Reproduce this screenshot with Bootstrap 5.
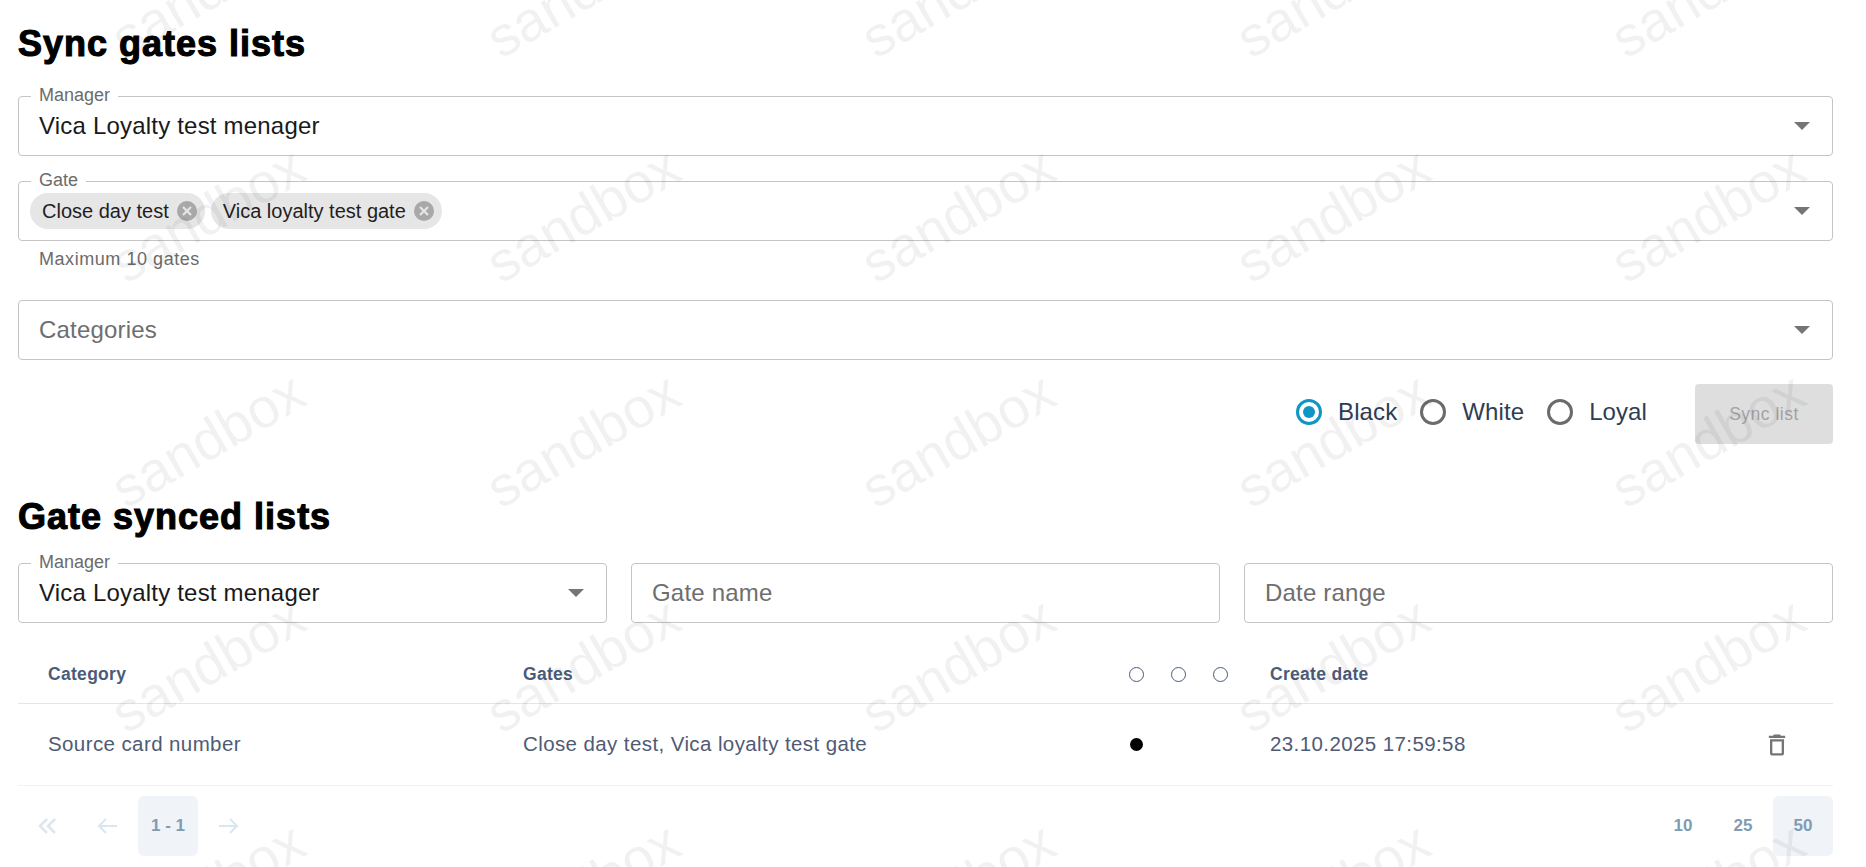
<!DOCTYPE html>
<html lang="en">
<head>
<meta charset="utf-8">
<title>Sync gates lists</title>
<link href="https://cdn.jsdelivr.net/npm/bootstrap@5.3.0/dist/css/bootstrap.min.css" rel="stylesheet">
<style>
html,body{height:867px;overflow:hidden;}
body{background:#fff;font-family:"Liberation Sans",Arial,sans-serif;color:#000;position:relative;}
.page-wrap{padding:0 33px 0 18px;}
.sec-title{font-size:36px;font-weight:700;line-height:37px;margin:0;color:#000;letter-spacing:1px;-webkit-text-stroke:1.1px #000;}
.title-a{padding-top:25px;margin-bottom:34px;}
.title-b{margin-top:54px;margin-bottom:28px;}
.fld{position:relative;border:1px solid #c4c4c4;border-radius:4px;height:60px;display:flex;align-items:center;padding:0 20px;font-size:24px;letter-spacing:.2px;color:#6e6e6e;background:transparent;}
.fld-eq{flex:1 1 0;}
.mt-gate{margin-top:25px;}
.mt-cat{margin-top:31px;}
.fld-val{color:#1a1a1a;}
.fld-label{position:absolute;top:-11px;left:12px;padding:0 8px;background:#fff;font-size:18px;line-height:18px;letter-spacing:0;color:#6b6b6b;}
.fld-caret{position:absolute;right:22px;top:50%;margin-top:-4px;width:0;height:0;border-left:8px solid transparent;border-right:8px solid transparent;border-top:8px solid #757575;}
.fld-chips{padding:0 11px;gap:6px;}
.chip-item{height:36px;border-radius:18px;background:#e6e6e6;display:flex;align-items:center;padding:0 8px 0 12px;font-size:20px;letter-spacing:0;color:#1f1f1f;gap:8px;}
.chip-x{width:20px;height:20px;display:block;}
.fld-help{font-size:18px;line-height:20px;color:#6b6b6b;padding-left:21px;margin-top:8px;letter-spacing:.55px;}
.radio-row{margin-top:24px;}
.radio-dot{width:26px;height:26px;border-radius:50%;border:3px solid #6b6b6b;display:block;flex:none;margin-bottom:4px;}
.radio-dot.on{border-color:#1096c4;position:relative;}
.radio-dot.on::after{content:"";position:absolute;inset:4px;border-radius:50%;background:#1096c4;}
.radio-text{font-size:24px;letter-spacing:.1px;color:#2e3d55;margin-left:16px;margin-right:23px;margin-bottom:4px;}
.radio-text.last{margin-right:48px;}
.sync-btn{width:138px;height:60px;background:#dedede;border:0;border-radius:4px;color:#a3a3a3;font-size:17.5px;letter-spacing:.5px;padding:0;}
.hcell{font-size:17.5px;font-weight:700;color:#4b5b78;letter-spacing:.3px;}
.tbl-head{height:81px;padding-top:22px;border-bottom:1px solid #d9e8f3;}
.tbl-row{height:82px;border-bottom:1px solid #eef1f5;}
.col-cat{width:475px;padding-left:30px;}
.col-gate{width:636px;padding-left:30px;}
.col-mark{width:141px;}
.mark-row{gap:27px;}
.dtext{font-size:20.5px;letter-spacing:.4px;color:#4f5b75;}
.mini-c{width:15px;height:15px;border:1.5px solid #4b5b78;border-radius:50%;display:block;}
.bull{width:13px;height:13px;background:#000;border-radius:50%;display:block;margin-left:1px;}
.trash-ic{margin-right:42px;}
.pager{margin-top:10px;}
.pg-box{width:60px;height:60px;border-radius:6px;display:flex;align-items:center;justify-content:center;color:#7e9cb2;font-weight:700;font-size:17px;}
.pg-box.act{background:#f0f3f8;}
.wm-layer{position:absolute;left:0;top:0;width:1866px;height:867px;overflow:hidden;pointer-events:none;z-index:5;}
.wm-item{position:absolute;font-size:56px;line-height:1;color:rgba(0,0,0,.055);transform:translate(-50%,-50%) rotate(-30deg);font-family:"Liberation Sans",sans-serif;}
</style>
</head>
<body>
<div class="page-wrap">
  <h2 class="sec-title title-a">Sync gates lists</h2>
  <div class="d-flex flex-column">
    <div class="fld"><span class="fld-label">Manager</span><span class="fld-val">Vica Loyalty test menager</span><span class="fld-caret"></span></div>
    <div class="fld fld-chips mt-gate"><span class="fld-label">Gate</span>
      <span class="chip-item">Close day test<svg class="chip-x" viewBox="0 0 20 20"><circle cx="10" cy="10" r="10" fill="#a8a8a8"/><path d="M6 6l8 8M14 6l-8 8" stroke="#e6e6e6" stroke-width="2.2"/></svg></span>
      <span class="chip-item">Vica loyalty test gate<svg class="chip-x" viewBox="0 0 20 20"><circle cx="10" cy="10" r="10" fill="#a8a8a8"/><path d="M6 6l8 8M14 6l-8 8" stroke="#e6e6e6" stroke-width="2.2"/></svg></span>
      <span class="fld-caret"></span></div>
    <div class="fld-help">Maximum 10 gates</div>
    <div class="fld mt-cat">Categories<span class="fld-caret"></span></div>
  </div>
  <div class="d-flex justify-content-end align-items-center radio-row">
    <span class="radio-dot on"></span><span class="radio-text">Black</span>
    <span class="radio-dot"></span><span class="radio-text">White</span>
    <span class="radio-dot"></span><span class="radio-text last">Loyal</span>
    <button class="sync-btn" disabled>Sync list</button>
  </div>
  <h2 class="sec-title title-b">Gate synced lists</h2>
  <div class="d-flex gap-4">
    <div class="fld fld-eq"><span class="fld-label">Manager</span><span class="fld-val">Vica Loyalty test menager</span><span class="fld-caret"></span></div>
    <div class="fld fld-eq">Gate name</div>
    <div class="fld fld-eq">Date range</div>
  </div>
  <div class="d-flex align-items-center tbl-head hcell">
    <div class="col-cat">Category</div>
    <div class="col-gate">Gates</div>
    <div class="col-mark d-flex mark-row"><span class="mini-c"></span><span class="mini-c"></span><span class="mini-c"></span></div>
    <div>Create date</div>
  </div>
  <div class="d-flex align-items-center tbl-row dtext">
    <div class="col-cat">Source card number</div>
    <div class="col-gate">Close day test, Vica loyalty test gate</div>
    <div class="col-mark"><span class="bull"></span></div>
    <div class="flex-fill">23.10.2025 17:59:58</div>
    <svg class="trash-ic" width="28" height="28" viewBox="0 0 24 24"><path fill="#757575" d="M6 19c0 1.1.9 2 2 2h8c1.1 0 2-.9 2-2V7H6v12zM8 9h8v10H8V9zm7.5-5l-1-1h-5l-1 1H5v2h14V4h-3.5z"/></svg>
  </div>
  <div class="d-flex align-items-center justify-content-between pager">
    <div class="d-flex">
      <span class="pg-box"><svg width="24" height="24" viewBox="0 0 24 24" fill="none" stroke="#dbe6ef" stroke-width="2.6"><path d="M11 5l-7 7 7 7M19 5l-7 7 7 7"/></svg></span>
      <span class="pg-box"><svg width="24" height="24" viewBox="0 0 24 24" fill="none" stroke="#dbe6ef" stroke-width="2"><path d="M21 12H3M10 5l-7 7 7 7"/></svg></span>
      <span class="pg-box act">1 - 1</span>
      <span class="pg-box"><svg width="24" height="24" viewBox="0 0 24 24" fill="none" stroke="#dbe6ef" stroke-width="2"><path d="M3 12h18M14 5l7 7-7 7"/></svg></span>
    </div>
    <div class="d-flex">
      <span class="pg-box">10</span><span class="pg-box">25</span><span class="pg-box act">50</span>
    </div>
  </div>
</div>
<div class="wm-layer" id="wm"></div>
<script>
var w=document.getElementById('wm');
for(var r=-1;r<5;r++){for(var c=0;c<5;c++){var s=document.createElement('span');s.className='wm-item';s.textContent='sandbox';s.style.left=(208+c*375)+'px';s.style.top=(-10+r*225+225)+'px';w.appendChild(s);}}
</script>
<script src="https://cdn.jsdelivr.net/npm/bootstrap@5.3.0/dist/js/bootstrap.bundle.min.js"></script>
</body>
</html>
